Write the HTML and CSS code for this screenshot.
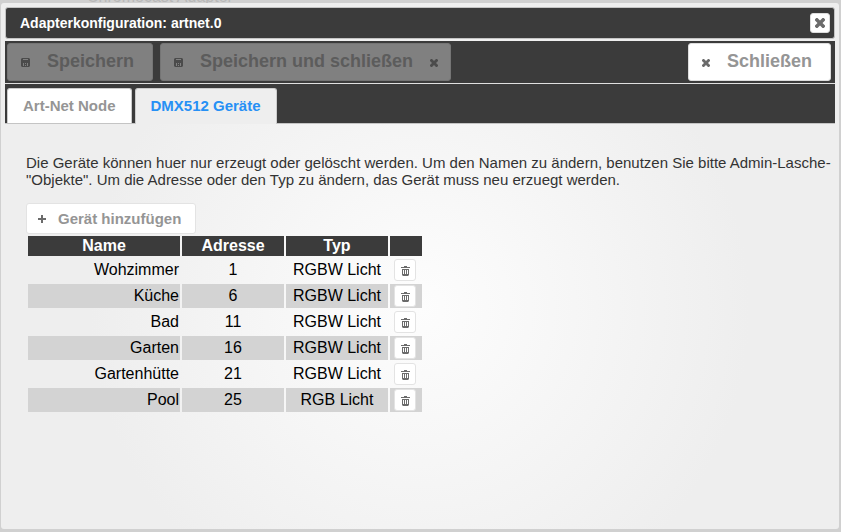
FILE: index.html
```html
<!DOCTYPE html>
<html lang="de">
<head>
  <meta charset="UTF-8">
  <meta name="viewport" content="width=device-width, initial-scale=1.0">
  <title>Adapterkonfiguration: artnet.0</title>
  <link rel="stylesheet" href="styles.css">
</head>
<body>
  <svg class="symbols" aria-hidden="true">
    <symbol id="icon-disk" viewBox="0 0 9 9">
      <path fill-rule="evenodd" d="M1 0h7l1 1v7l-1 1H1L0 8V1zM2 1v1h5V1zM2 5v3h1V5zM4 5v1h1V5zM6 5v3h1V5zM4 7v1h1V7z"/>
    </symbol>
    <symbol id="icon-close" viewBox="0 0 8 8">
      <path d="M1 0h1l2 2 2-2h1l1 1v1L6 4l2 2v1L7 8H6L4 6 2 8H1L0 7V6l2-2-2-2V1z"/>
    </symbol>
    <symbol id="icon-plus" viewBox="0 0 8 8">
      <path d="M3 0h2v3h3v2H5v3H3V5H0V3h3z"/>
    </symbol>
    <symbol id="icon-trash" viewBox="0 0 9 10">
      <path fill-rule="evenodd" d="M3 0h3v1h3v1H0V1h3zM1 3h7v6l-1 1H2L1 9zM2 4v4h1V4zM4 4v4h1V4zM6 4v4h1V4z"/>
    </symbol>
  </svg>
  <div class="behind" aria-hidden="true">Chromecast Adapter</div>
  <div class="dialog">
    <header class="titlebar">
      <h1>Adapterkonfiguration: artnet.0</h1>
      <button class="titlebar-close" type="button" aria-label="Schließen"><svg class="icon"><use href="#icon-close"/></svg></button>
    </header>
    <div class="toolbar">
      <button class="button" type="button" disabled><svg class="icon icon-disk"><use href="#icon-disk"/></svg>Speichern</button>
      <button class="button" type="button" disabled><svg class="icon icon-disk"><use href="#icon-disk"/></svg>Speichern und schließen<svg class="icon"><use href="#icon-close"/></svg></button>
      <button class="button button-close" type="button"><svg class="icon"><use href="#icon-close"/></svg>Schließen</button>
    </div>
    <nav class="tabs">
      <a class="tab" href="#node">Art-Net Node</a>
      <a class="tab active" href="#devices">DMX512 Geräte</a>
    </nav>
    <main class="panel" id="devices">
      <p>Die Geräte können huer nur erzeugt oder gelöscht werden. Um den Namen zu ändern, benutzen Sie bitte Admin-Lasche-"Objekte". Um die Adresse oder den Typ zu ändern, das Gerät muss neu erzuegt werden.</p>
      <button class="add" type="button"><svg class="icon"><use href="#icon-plus"/></svg>Gerät hinzufügen</button>
      <table class="devices">
        <thead>
          <tr><th class="name">Name</th><th class="address">Adresse</th><th class="type">Typ</th><th class="action"></th></tr>
        </thead>
        <tbody>
          <tr><td class="name">Wohzimmer</td><td>1</td><td>RGBW Licht</td><td><button class="delete" type="button" aria-label="Löschen"><svg class="icon icon-trash"><use href="#icon-trash"/></svg></button></td></tr>
          <tr><td class="name">Küche</td><td>6</td><td>RGBW Licht</td><td><button class="delete" type="button" aria-label="Löschen"><svg class="icon icon-trash"><use href="#icon-trash"/></svg></button></td></tr>
          <tr><td class="name">Bad</td><td>11</td><td>RGBW Licht</td><td><button class="delete" type="button" aria-label="Löschen"><svg class="icon icon-trash"><use href="#icon-trash"/></svg></button></td></tr>
          <tr><td class="name">Garten</td><td>16</td><td>RGBW Licht</td><td><button class="delete" type="button" aria-label="Löschen"><svg class="icon icon-trash"><use href="#icon-trash"/></svg></button></td></tr>
          <tr><td class="name">Gartenhütte</td><td>21</td><td>RGBW Licht</td><td><button class="delete" type="button" aria-label="Löschen"><svg class="icon icon-trash"><use href="#icon-trash"/></svg></button></td></tr>
          <tr><td class="name">Pool</td><td>25</td><td>RGB Licht</td><td><button class="delete" type="button" aria-label="Löschen"><svg class="icon icon-trash"><use href="#icon-trash"/></svg></button></td></tr>
        </tbody>
      </table>
    </main>
  </div>
</body>
</html>
```

FILE: styles.css
```css
* {
  box-sizing: border-box;
  margin: 0;
  padding: 0;
}
body {
  display: flex;
  flex-direction: column;
  min-height: 100vh;
  padding: 0 2px 3px 1px;
  background-color: #d0d0d0;
  font-family: Arial, "Liberation Sans", sans-serif;
}
button {
  font-family: inherit;
}
.symbols {
  position: absolute;
  width: 0;
  height: 0;
}
.icon {
  flex: none;
  width: 8px;
  height: 8px;
  fill: #6b6b6b;
}
.icon-disk {
  width: 9px;
  height: 9px;
}
.icon-trash {
  width: 9px;
  height: 10px;
}
/* page behind the dialog */
.behind {
  display: flex;
  align-items: flex-end;
  height: 3px;
  padding-left: 86px;
  overflow: hidden;
  color: #b8b8b8;
  font-size: 16px;
  line-height: 12px;
}
.dialog {
  flex: 1;
  padding: 4px;
  border-radius: 3px;
  background: #eee radial-gradient(circle at 50% 58%, #fdfdfd 0, #eee 330px);
}
.titlebar {
  display: flex;
  align-items: center;
  justify-content: space-between;
  height: 32px;
  margin-bottom: 2px;
  padding: 0 4px 0 14px;
  border: 1px solid #c4c4c4;
  border-radius: 3px;
  background-color: #3b3b3b;
  color: #fff;
}
.titlebar h1 {
  font-size: 14px;
}
.titlebar-close {
  display: flex;
  align-items: center;
  justify-content: center;
  width: 20px;
  height: 20px;
  border: 1px solid #ddd;
  border-radius: 3px;
  background-color: #fff;
}
.titlebar-close .icon {
  width: 10px;
  height: 10px;
}
.toolbar {
  display: flex;
  gap: 7px;
  height: 42px;
  padding: 2px 4px 2px 2px;
  background-color: #3b3b3b;
}
.button {
  display: flex;
  align-items: center;
  gap: 17px;
  height: 38px;
  padding: 0 18px 2px 13px;
  border: 1px solid #ddd;
  border-radius: 3px;
  background-color: #fff;
  color: #959595;
  font-size: 18px;
  font-weight: bold;
}
.button .icon {
  margin-top: 3px;
}
.button:disabled {
  padding-right: 12px;
  border-color: #757575;
  background-color: #808080;
  color: #5c5c5c;
}
.button:disabled:first-child {
  padding-right: 18px;
}
.button:disabled .icon {
  fill: #4b4b4b;
}
.button-close {
  margin-left: auto;
}
.tabs {
  display: flex;
  gap: 3px;
  height: 41px;
  padding: 4px 2px 0;
  border-top: 1px solid #e0e0e0;
  border-bottom: 1px solid #c4c4c4;
  background-color: #3b3b3b;
}
.tab {
  height: 35px;
  padding: 0 15px;
  border: 1px solid #ccc;
  border-bottom: 0;
  border-radius: 3px 3px 0 0;
  background-color: #fff;
  color: #959595;
  font-size: 15px;
  font-weight: bold;
  line-height: 34px;
  text-decoration: none;
}
.tab.active {
  height: 36px;
  background-color: #eee;
  color: #2690f5;
}
.panel {
  padding: 30px 4px 30px 21px;
}
.panel p {
  margin-bottom: 15px;
  color: #333;
  font-size: 15px;
  line-height: 17px;
}
.add {
  display: flex;
  align-items: center;
  gap: 12px;
  height: 31px;
  padding: 0 14px 0 11px;
  border: 1px solid #e3e3e3;
  border-radius: 3px;
  background-color: #fff;
  color: #959595;
  font-size: 15px;
  font-weight: bold;
}
.devices {
  border-spacing: 2px;
  font-size: 16px;
  line-height: 18px;
}
th,
td {
  padding: 1px;
  text-align: center;
}
th {
  height: 20px;
  background-color: #3b3b3b;
  color: #fff;
}
td {
  height: 24px;
}
.name {
  width: 152px;
}
td.name {
  text-align: right;
}
.address,
.type {
  width: 102px;
}
.action {
  width: 32px;
}
tbody tr:nth-child(even) td {
  background-color: #d3d3d3;
}
.delete {
  display: flex;
  align-items: center;
  justify-content: center;
  width: 22px;
  height: 22px;
  margin-left: 3px;
  padding-top: 2px;
  border: 1px solid #e3e3e3;
  border-radius: 3px;
  background-color: #fff;
}
```
